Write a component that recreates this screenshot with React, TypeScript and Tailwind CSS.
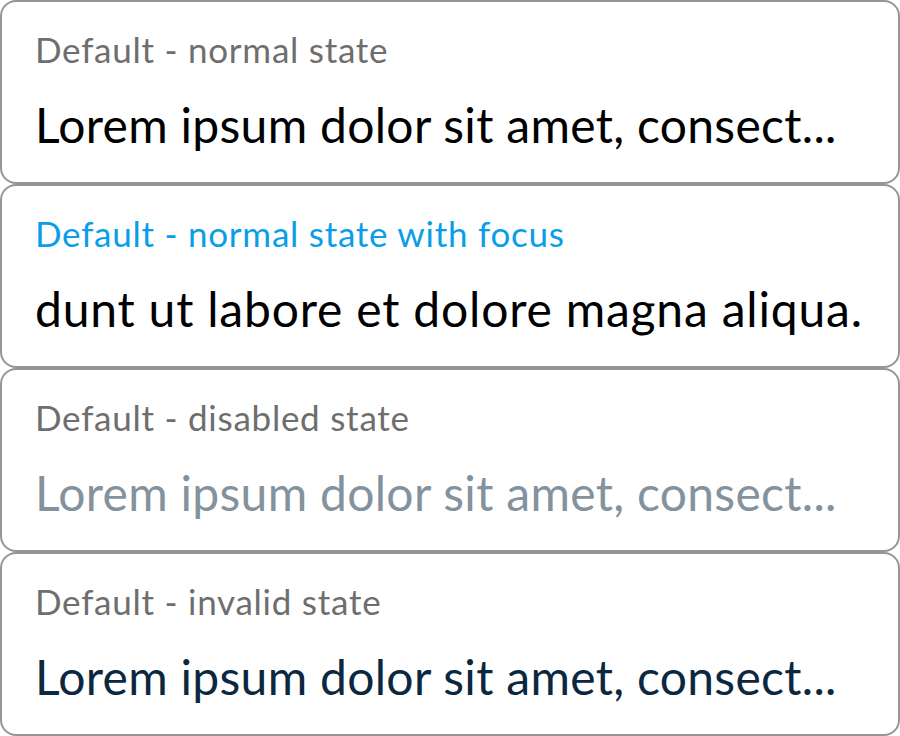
type FieldState = 'normal' | 'focus' | 'disabled' | 'invalid';

interface Field {
  label: string;
  value: string;
  state: FieldState;
}

const fields: Field[] = [
  { label: 'Default - normal state', value: 'Lorem ipsum dolor sit amet, consect...', state: 'normal' },
  { label: 'Default - normal state with focus', value: 'dunt ut labore et dolore magna aliqua.', state: 'focus' },
  { label: 'Default - disabled state', value: 'Lorem ipsum dolor sit amet, consect...', state: 'disabled' },
  { label: 'Default - invalid state', value: 'Lorem ipsum dolor sit amet, consect...', state: 'invalid' },
];

const labelColor: Record<FieldState, string> = {
  normal: 'text-[#6e6e6e]',
  focus: 'text-[#0a9ee9]',
  disabled: 'text-[#6e6e6e]',
  invalid: 'text-[#6e6e6e]',
};

const valueColor: Record<FieldState, string> = {
  normal: 'text-black tracking-[0.3px]',
  focus: 'text-black tracking-[0.8px]',
  disabled: 'text-[#84929d] tracking-[0.3px]',
  invalid: 'text-[#0b2840] tracking-[0.3px]',
};

const TextField = ({ field }: { field: Field }) => (
  <div className="h-[184px] rounded-[16px] border-2 border-[#969696] bg-white pl-[33px] pr-[20px] pt-[29px]">
    <div className={`text-[35px] leading-[36px] tracking-[0.75px] whitespace-nowrap ${labelColor[field.state]}`}>
      {field.label}
    </div>
    <div className={`mt-[30px] text-[48px] leading-[56px] whitespace-nowrap overflow-hidden ${valueColor[field.state]}`}>
      {field.value}
    </div>
  </div>
);

export default function App() {
  return (
    <div className="w-[900px] h-[736px] bg-white flex flex-col" style={{ fontFamily: 'Lato, sans-serif' }}>
      {fields.map((f) => (
        <TextField key={f.label} field={f} />
      ))}
    </div>
  );
}
